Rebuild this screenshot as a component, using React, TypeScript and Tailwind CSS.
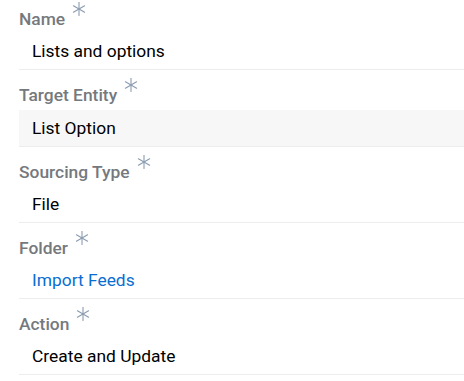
import React from "react";

function Star() {
  return (
    <svg width="14" height="14" viewBox="0 0 14 14" className="ml-[7px] -mt-[5px] shrink-0">
      <g stroke="#8a9bb0" strokeWidth="1.1" strokeLinecap="round">
        <line x1="7" y1="0.5" x2="7" y2="13.5" />
        <line x1="1.4" y1="3.75" x2="12.6" y2="10.25" />
        <line x1="1.4" y1="10.25" x2="12.6" y2="3.75" />
      </g>
    </svg>
  );
}

const fields = [
  { label: "Name", value: "Lists and options", shaded: false, link: false },
  { label: "Target Entity", value: "List Option", shaded: true, link: false },
  { label: "Sourcing Type", value: "File", shaded: false, link: false },
  { label: "Folder", value: "Import Feeds", shaded: false, link: true },
  { label: "Action", value: "Create and Update", shaded: false, link: false },
];

export default function App() {
  return (
    <div className="w-[464px] h-[381px] overflow-hidden bg-white" style={{ fontFamily: "Roboto, 'Liberation Sans', sans-serif" }}>
      <div className="-mt-[6px]">
        {fields.map((f) => (
          <div key={f.label}>
            <div className="h-[39.25px] pt-[13px] pl-[19px] flex items-start">
              <span className="text-[17.4px] leading-[24px] font-medium text-[#75797e]">{f.label}</span>
              <Star />
            </div>
            <div
              className={
                "ml-[19px] pl-[13px] h-[37px] flex items-center border-b border-[#ededed] " +
                (f.shaded ? "bg-[#f7f7f7]" : "bg-white")
              }
            >
              <span className={"text-[17.4px] leading-[24px] " + (f.link ? "text-[#0a6ed1]" : "text-black")}>
                {f.value}
              </span>
            </div>
          </div>
        ))}
      </div>
    </div>
  );
}
